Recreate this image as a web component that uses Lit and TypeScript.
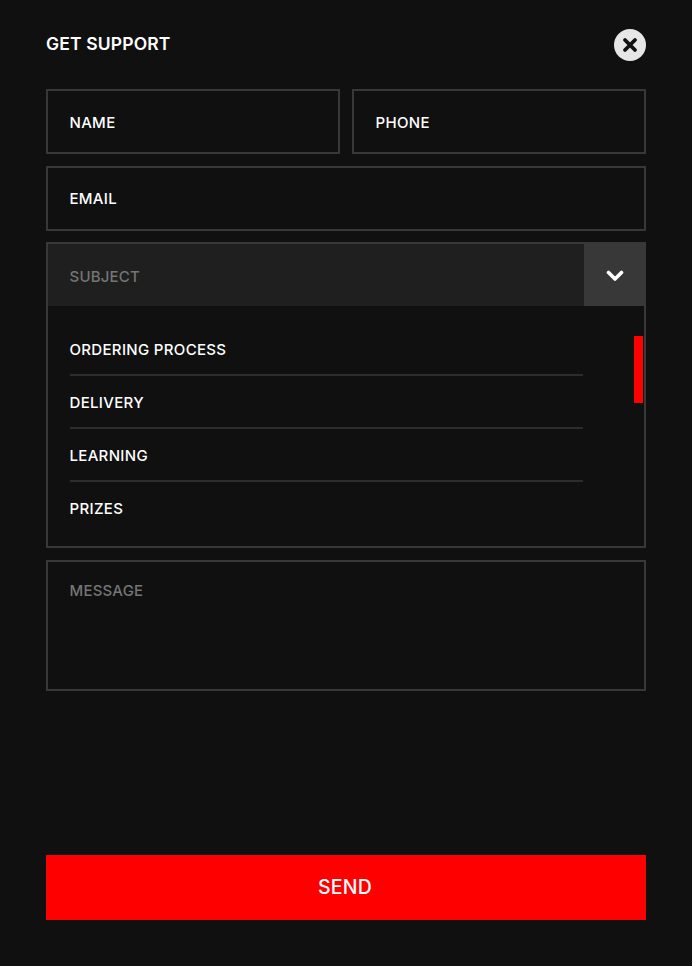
import { LitElement, html, css } from "lit";
import { customElement } from "lit/decorators.js";

@customElement("app-root")
export class AppRoot extends LitElement {
  static styles = css`
    :host { display: block; width: 692px; height: 966px; background: #101011; color: #fff; font-family: Inter, "Liberation Sans", sans-serif; font-weight: 500; font-size: 15px; letter-spacing: 0.32px; }
    .page { box-sizing: border-box; height: 966px; padding: 28px 46px 46px; display: flex; flex-direction: column; }
    .head { display: flex; justify-content: space-between; align-items: center; height: 33px; margin-bottom: 28px; }
    .title { font-size: 17.5px; font-weight: 600; letter-spacing: 0.15px; padding-bottom: 3px; }
    .close { width: 32px; height: 32px; border-radius: 50%; background: #e6e6e6; display: flex; align-items: center; justify-content: center; }
    .row { display: flex; gap: 12px; margin-bottom: 12px; }
    .row.tight { margin-bottom: 11px; }
    .field { box-sizing: border-box; flex: 1; height: 65px; border: 2px solid #383838; padding: 0 22px 0 21.5px; display: flex; align-items: center; }
    .field.low { padding-top: 2px; }
    .select { box-sizing: border-box; height: 306px; border: 2px solid #383838; margin-bottom: 12px; display: flex; flex-direction: column; position: relative; }
    .select-head { height: 62px; background: #1f1f1f; display: flex; align-items: stretch; justify-content: space-between; padding-left: 21.5px; }
    .subject { display: flex; align-items: center; padding-top: 2px; letter-spacing: 0.2px; }
    .muted { color: #757575; }
    .chev { width: 60px; background: #383838; display: flex; align-items: center; justify-content: center; }
    .chev svg { margin: 2px 0 0 1px; }
    .list { padding: 17px 0 0 21.5px; width: 513px; }
    .item { height: 53px; box-sizing: border-box; display: flex; align-items: center; padding-top: 2px; border-bottom: 2px solid #2d2d2d; }
    .item:last-child { border-bottom: 0; padding-top: 0; }
    .thumb { position: absolute; right: 1px; top: 92px; width: 9px; height: 67px; background: #ff0000; }
    .message { box-sizing: border-box; height: 131px; border: 2px solid #383838; padding: 19px 22px 19px 21.5px; letter-spacing: 0.2px; }
    .send { margin-top: auto; height: 65px; background: #ff0000; display: flex; align-items: center; justify-content: center; font-size: 19.5px; letter-spacing: 0.2px; padding: 0 2px 2px 0; box-sizing: border-box; }
  `;

  render() {
    return html`<div class="page">
      <div class="head">
        <div class="title">GET SUPPORT</div>
        <div class="close">
          <svg width="16" height="16" viewBox="0 0 16 16"><path d="M3 3 13 13M13 3 3 13" stroke="#111" stroke-width="3.8" stroke-linecap="round" fill="none"/></svg>
        </div>
      </div>
      <div class="row"><div class="field low">NAME</div><div class="field low">PHONE</div></div>
      <div class="row tight"><div class="field">EMAIL</div></div>
      <div class="select">
        <div class="select-head">
          <span class="muted subject">SUBJECT</span>
          <div class="chev"><svg width="18" height="12" viewBox="0 0 18 12"><path d="M2.5 2.5 9 9 15.500 2.500" stroke="#fff" stroke-width="3.6" stroke-linecap="round" stroke-linejoin="round" fill="none"/></svg></div>
        </div>
        <div class="list">
          ${["ORDERING PROCESS", "DELIVERY", "LEARNING", "PRIZES"].map((t) => html`<div class="item">${t}</div>`)}
        </div>
        <div class="thumb"></div>
      </div>
      <div class="message muted">MESSAGE</div>
      <div class="send">SEND</div>
    </div>`;
  }
}
